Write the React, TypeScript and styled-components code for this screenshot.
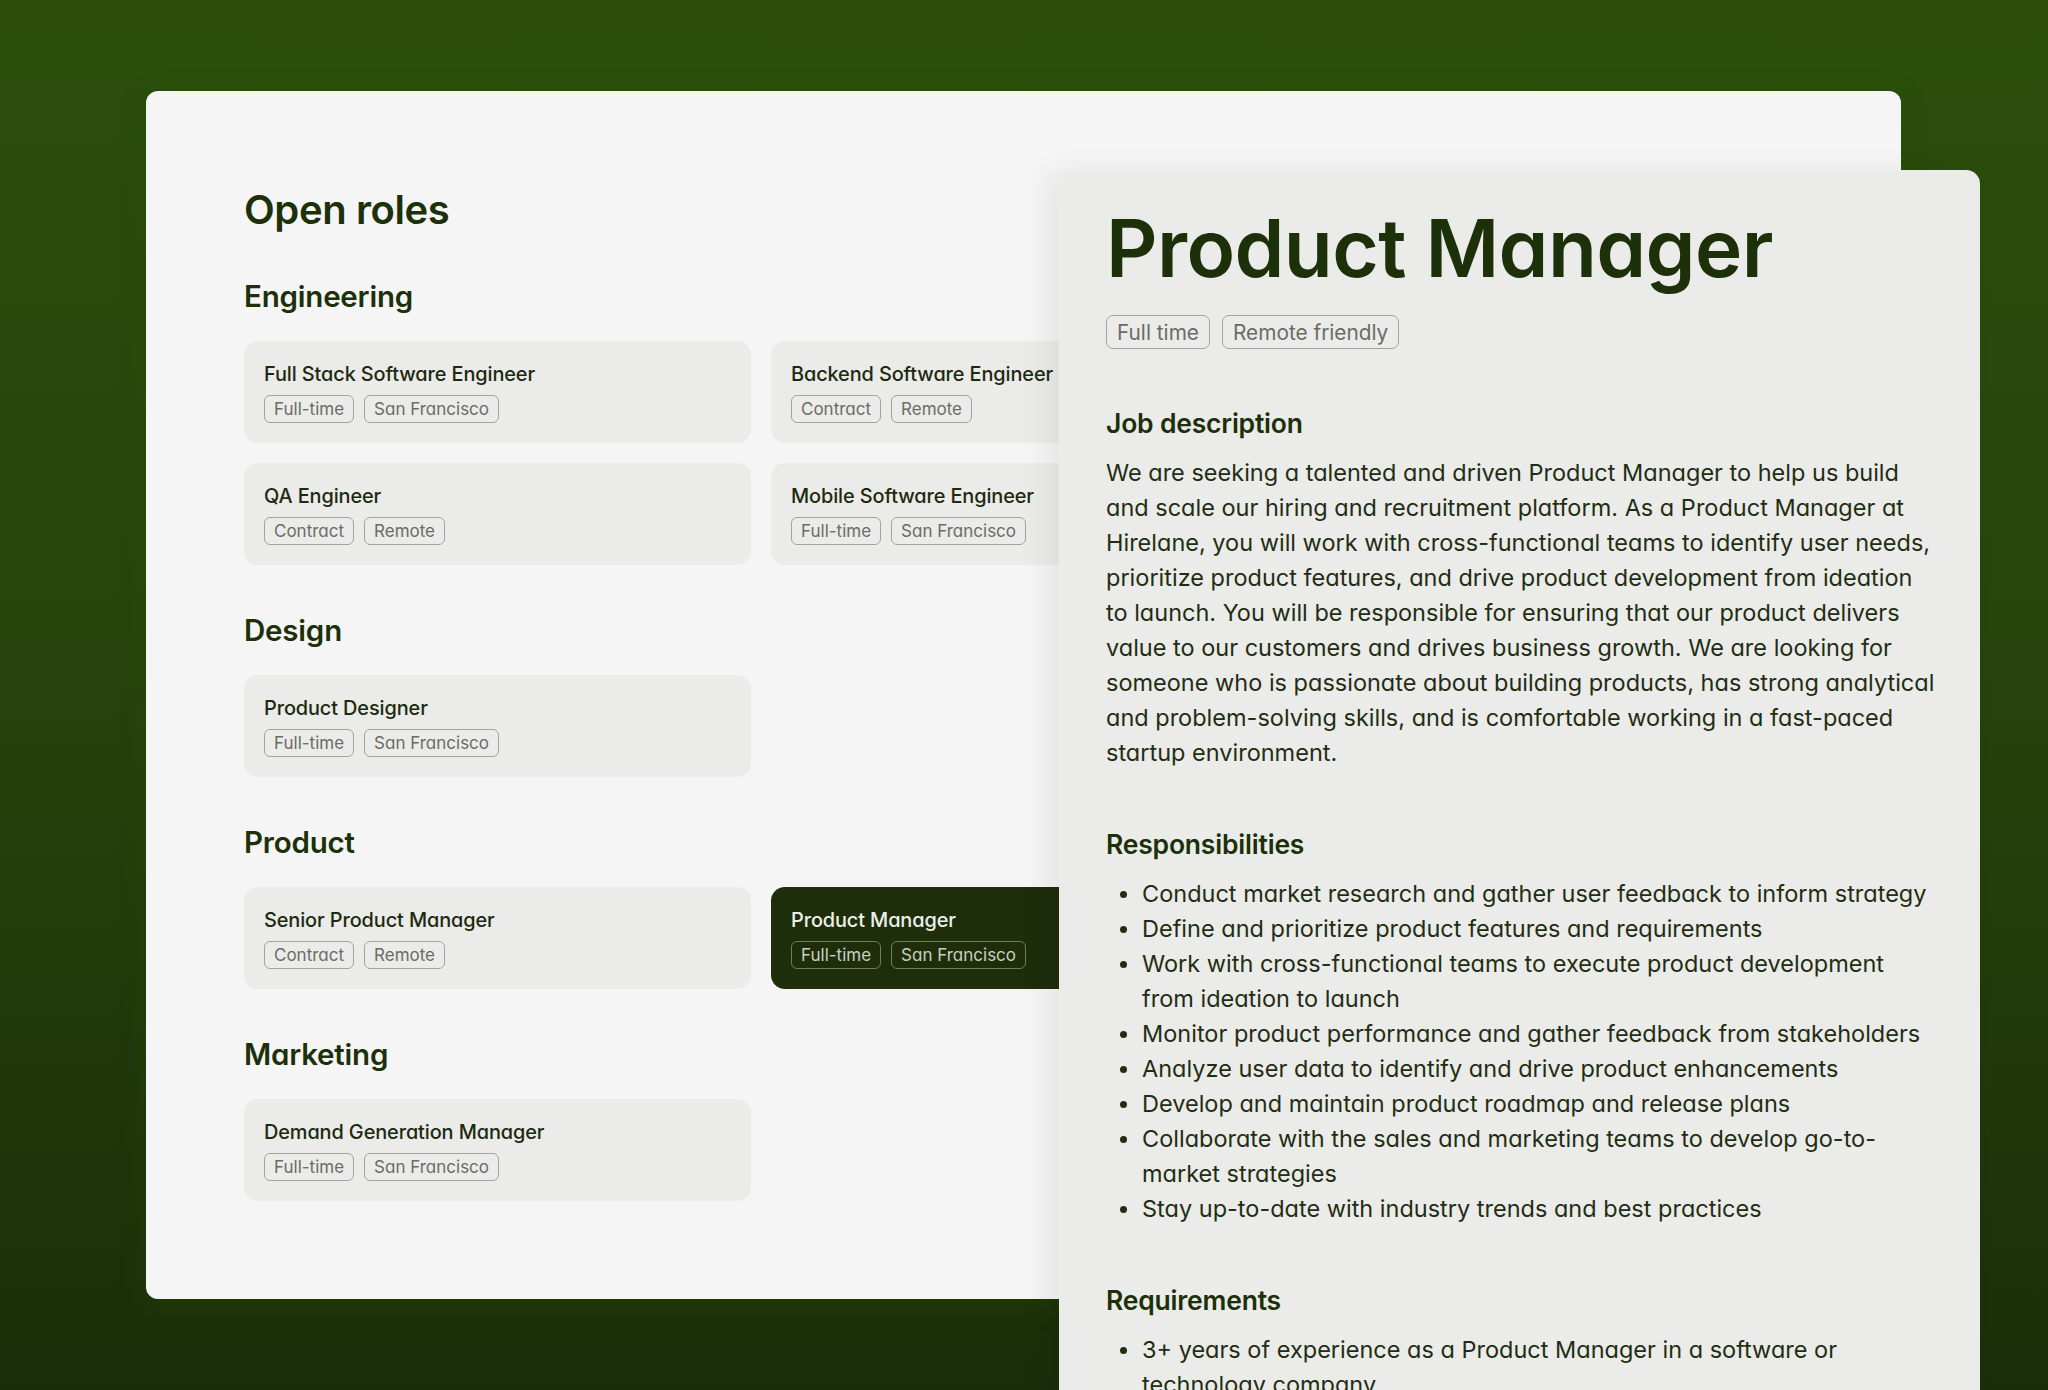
import React from "react";
import styled, { createGlobalStyle } from "styled-components";

const Global = createGlobalStyle`
  html, body {
    margin: 0;
    padding: 0;
    height: 1390px;
    overflow: hidden;
  }
  body {
    font-family: Inter, "Noto Sans", "Liberation Sans", sans-serif;
    font-feature-settings: "cv11" 1;
    -webkit-font-smoothing: antialiased;
  }
  * { box-sizing: border-box; }
`;

const Page = styled.div`
  width: 2048px;
  height: 1390px;
  overflow: hidden;
  background: linear-gradient(180deg, #2b4f0b 0%, #26450b 45%, #1b2e0a 100%);
  padding-top: 91px;
  padding-left: 146px;
`;

const Stage = styled.div`
  position: relative;
  width: 1755px;
`;

const MainCard = styled.div`
  background: #f5f5f5;
  border-radius: 12px;
  padding: 95px 98px 98px;
  box-shadow: 0 6px 24px rgba(40, 80, 10, 0.35);
`;

const PageTitle = styled.h1`
  margin: 0;
  font-size: 40px;
  line-height: 48px;
  font-weight: 600;
  color: #1c300a;
  letter-spacing: -0.4px;
`;

const Section = styled.section<{ $first?: boolean }>`
  margin-top: ${(p) => (p.$first ? "45px" : "48px")};
`;

const SectionTitle = styled.h2`
  margin: 0 0 28px;
  font-size: 29.5px;
  line-height: 34px;
  font-weight: 600;
  color: #1c300a;
  letter-spacing: -0.2px;
`;

const Grid = styled.div`
  display: grid;
  grid-template-columns: repeat(2, 507px);
  gap: 20px;
`;

const RoleCard = styled.div<{ $active?: boolean }>`
  height: 102px;
  border-radius: 14px;
  padding: 20px 20px 0;
  background: ${(p) => (p.$active ? "#1e2e0b" : "#ebebe9")};
  display: flex;
  flex-direction: column;
  gap: 8px;
`;

const RoleTitle = styled.div<{ $active?: boolean }>`
  font-size: 19.9px;
  line-height: 26px;
  font-weight: 500;
  color: ${(p) => (p.$active ? "#eef0e8" : "#1c2a10")};
  letter-spacing: -0.1px;
`;

const TagRow = styled.div`
  display: flex;
  gap: 10px;
`;

const Tag = styled.span<{ $active?: boolean; $big?: boolean }>`
  display: inline-flex;
  align-items: center;
  height: ${(p) => (p.$big ? "34px" : "28px")};
  padding: 0 ${(p) => (p.$big ? "10px" : "9px")};
  border-radius: ${(p) => (p.$big ? "7px" : "6px")};
  border: 1.5px solid ${(p) => (p.$active ? "#6f7d5f" : "#a4a49e")};
  color: ${(p) => (p.$active ? "#c9cfc0" : "#6c6c66")};
  font-size: ${(p) => (p.$big ? "20.8px" : "17px")};
  font-weight: 400;
  white-space: nowrap;
`;

const Detail = styled.aside`
  position: absolute;
  top: 79px;
  left: 913px;
  width: 921px;
  height: 1300px;
  background: #ebebe9;
  border-radius: 14px;
  padding: 34px 40px 0 47px;
  box-shadow: -14px 0 28px rgba(0, 0, 0, 0.06);
  color: #1f2e12;
`;

const DetailTitle = styled.h1`
  margin: 0;
  font-size: 80px;
  line-height: 88px;
  font-weight: 600;
  color: #1c300a;
  letter-spacing: -0.6px;
`;

const DetailTags = styled(TagRow)`
  margin-top: 23px;
  gap: 12px;
`;

const Block = styled.div`
  margin-top: 58px;
`;

const BlockTitle = styled.h3`
  margin: 0 0 16px;
  font-size: 26.5px;
  line-height: 32px;
  font-weight: 600;
  color: #1c300a;
  letter-spacing: -0.2px;
`;

const Para = styled.p`
  margin: 0;
  font-size: 23.5px;
  line-height: 35px;
  color: #1f2e12;
`;

const List = styled.ul`
  margin: 0;
  padding: 0;
  list-style: none;
`;

const Item = styled.li`
  position: relative;
  padding-left: 36px;
  font-size: 23.5px;
  line-height: 35px;
  color: #1f2e12;
  &::before {
    content: "";
    position: absolute;
    left: 14px;
    top: 15px;
    width: 7px;
    height: 7px;
    border-radius: 50%;
    background: #1f2e12;
  }
`;

type Role = { title: string; tags: string[]; active?: boolean };

const sections: { name: string; roles: Role[] }[] = [
  {
    name: "Engineering",
    roles: [
      { title: "Full Stack Software Engineer", tags: ["Full-time", "San Francisco"] },
      { title: "Backend Software Engineer", tags: ["Contract", "Remote"] },
      { title: "QA Engineer", tags: ["Contract", "Remote"] },
      { title: "Mobile Software Engineer", tags: ["Full-time", "San Francisco"] },
    ],
  },
  {
    name: "Design",
    roles: [{ title: "Product Designer", tags: ["Full-time", "San Francisco"] }],
  },
  {
    name: "Product",
    roles: [
      { title: "Senior Product Manager", tags: ["Contract", "Remote"] },
      { title: "Product Manager", tags: ["Full-time", "San Francisco"], active: true },
    ],
  },
  {
    name: "Marketing",
    roles: [{ title: "Demand Generation Manager", tags: ["Full-time", "San Francisco"] }],
  },
];

const responsibilities = [
  "Conduct market research and gather user feedback to inform strategy",
  "Define and prioritize product features and requirements",
  "Work with cross-functional teams to execute product development from ideation to launch",
  "Monitor product performance and gather feedback from stakeholders",
  "Analyze user data to identify and drive product enhancements",
  "Develop and maintain product roadmap and release plans",
  "Collaborate with the sales and marketing teams to develop go-to-market strategies",
  "Stay up-to-date with industry trends and best practices",
];

const requirements = [
  "3+ years of experience as a Product Manager in a software or technology company",
];

export default function App() {
  return (
    <>
      <Global />
      <Page>
        <Stage>
          <MainCard>
            <PageTitle>Open roles</PageTitle>
            {sections.map((s, i) => (
              <Section key={s.name} $first={i === 0}>
                <SectionTitle>{s.name}</SectionTitle>
                <Grid>
                  {s.roles.map((r) => (
                    <RoleCard key={r.title} $active={r.active}>
                      <RoleTitle $active={r.active}>{r.title}</RoleTitle>
                      <TagRow>
                        {r.tags.map((t) => (
                          <Tag key={t} $active={r.active}>
                            {t}
                          </Tag>
                        ))}
                      </TagRow>
                    </RoleCard>
                  ))}
                </Grid>
              </Section>
            ))}
          </MainCard>
          <Detail>
            <DetailTitle>Product Manager</DetailTitle>
            <DetailTags>
              <Tag $big>Full time</Tag>
              <Tag $big>Remote friendly</Tag>
            </DetailTags>
            <Block>
              <BlockTitle>Job description</BlockTitle>
              <Para>
                We are seeking a talented and driven Product Manager to help us build and scale our
                hiring and recruitment platform. As a Product Manager at Hirelane, you will work with
                cross-functional teams to identify user needs, prioritize product features, and drive
                product development from ideation to launch. You will be responsible for ensuring that
                our product delivers value to our customers and drives business growth. We are looking
                for someone who is passionate about building products, has strong analytical and
                problem-solving skills, and is comfortable working in a fast-paced startup environment.
              </Para>
            </Block>
            <Block>
              <BlockTitle>Responsibilities</BlockTitle>
              <List>
                {responsibilities.map((r) => (
                  <Item key={r}>{r}</Item>
                ))}
              </List>
            </Block>
            <Block>
              <BlockTitle>Requirements</BlockTitle>
              <List>
                {requirements.map((r) => (
                  <Item key={r}>{r}</Item>
                ))}
              </List>
            </Block>
          </Detail>
        </Stage>
      </Page>
    </>
  );
}
